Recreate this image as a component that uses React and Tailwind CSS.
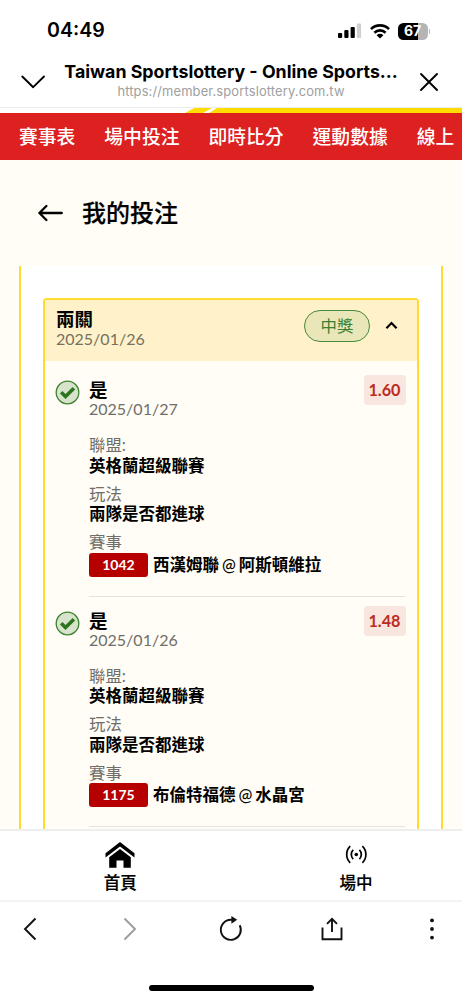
import { clsx } from 'clsx';

const menuItems = ['賽事表', '場中投注', '即時比分', '運動數據', '線上'];

const legs = [
  {
    id: '1042',
    pick: '是',
    date: '2025/01/27',
    odds: '1.60',
    league: '英格蘭超級聯賽',
    market: '兩隊是否都進球',
    home: '西漢姆聯',
    away: '阿斯頓維拉',
  },
  {
    id: '1175',
    pick: '是',
    date: '2025/01/26',
    odds: '1.48',
    league: '英格蘭超級聯賽',
    market: '兩隊是否都進球',
    home: '布倫特福德',
    away: '水晶宮',
  },
];

const StatusBar = () => (
  <div className="flex h-[62px] shrink-0 items-center justify-between pr-[32px] pl-[47px]">
    <span className="text-[19.6px] font-semibold leading-none">04:49</span>
    <div className="flex items-center">
      <svg width="24" height="16" viewBox="0 0 24 16">
        <rect x="0" y="10" width="4.2" height="5" rx="1" />
        <rect x="6.3" y="7" width="4.2" height="8" rx="1" />
        <rect x="12.6" y="4" width="4.2" height="11" rx="1" />
        <rect x="18.9" y="0.5" width="4.2" height="14.5" rx="1" fill="#d0d0d0" />
      </svg>
      <svg className="ml-2" width="20" height="15" viewBox="0 0 20 15">
        <g fill="none" stroke="#000" strokeWidth="2.6">
          <path d="M1 5.1a12.8 12.8 0 0 1 18 0" />
          <path d="M4.4 8.7a8 8 0 0 1 11.2 0" />
        </g>
        <path d="M10 14.6 6.6 11.2a4.9 4.9 0 0 1 6.8 0z" />
      </svg>
      <div className="ml-2 flex items-center">
        <div className="flex h-[17px] w-[30px] items-center justify-center rounded-[5.5px] bg-linear-to-r from-black from-67% to-[#b4b4b4] to-67% text-[14px] font-bold leading-none text-white">
          67
        </div>
        <div className="ml-px h-[5px] w-[1.5px] rounded-r-full bg-[#b4b4b4]" />
      </div>
    </div>
  </div>
);

const BrowserHeader = () => (
  <header className="flex h-[46px] shrink-0 items-start justify-between border-b border-[#ebebeb] px-5">
    <svg className="mt-[12px]" width="26" height="16" viewBox="0 0 26 16" fill="none" stroke="#000" strokeWidth="1.9" strokeLinecap="round" strokeLinejoin="round">
      <path d="M2.3 2.5 13.2 13.2 24 2.5" />
    </svg>
    <div className="mr-[3px] flex flex-col items-center whitespace-nowrap">
      <h1 className="text-[17.8px] font-bold leading-[20px]">Taiwan Sportslottery - Online Sports...</h1>
      <p className="text-[12.9px] leading-[20px] tracking-[0.15px] text-[#a0a0a0]">https://member.sportslottery.com.tw</p>
    </div>
    <svg className="mt-[10px] mr-[3px]" width="20" height="20" viewBox="0 0 20 20" stroke="#000" strokeWidth="1.9" strokeLinecap="round">
      <path d="m2 2 16 16M18 2 2 18" />
    </svg>
  </header>
);

const SiteMenu = () => (
  <>
    <svg className="block h-[5px] w-full shrink-0" viewBox="0 0 462 5">
      <path d="M194 0h18l-9 5h-18zM217 0h245v5H209z" fill="#ffdd00" />
    </svg>
    <nav className="flex h-[46.5px] shrink-0 items-center gap-[29px] overflow-hidden bg-[#dd2020] pt-[4px] pl-[19px] text-[18.8px] font-medium text-white">
      {menuItems.map((item) => (
        <span key={item} className="shrink-0 whitespace-nowrap leading-none">{item}</span>
      ))}
    </nav>
  </>
);

const CheckBadge = () => (
  <svg className="mt-[5px] shrink-0" width="25" height="25" viewBox="0 0 25 25">
    <circle cx="12.5" cy="12.5" r="11.3" fill="#d7e3cd" stroke="#3b812f" strokeWidth="1.3" />
    <path d="m6.2 12.3 4.3 4.3 8.4-8.4" fill="none" stroke="#2c751e" strokeWidth="3.5" />
  </svg>
);

const Field = ({ label, value }) => (
  <div className="h-[48.7px]">
    <p className="text-[16.4px] leading-[20.5px] text-[#6f6e6a]">{label}</p>
    <p className="text-[16.5px] font-bold leading-[20.5px]">{value}</p>
  </div>
);

const Leg = ({ leg, first }) => (
  <div className={clsx('flex shrink-0 pr-[11.5px] pl-[10px]', first ? 'h-[236px] pt-[14.5px]' : 'h-[230.5px] pt-[9px]')}>
    <CheckBadge />
    <div className="ml-[9px] flex flex-1 flex-col">
      <div className="flex h-[60px] items-start justify-between">
        <div>
          <p className="-mt-px pt-[5px] text-[18.5px] font-bold leading-[22px]">{leg.pick}</p>
          <p className="text-[16px] leading-[15px] text-[#6f6e6a]">{leg.date}</p>
        </div>
        <span className="flex h-[30px] w-[42px] items-center justify-center rounded-[4px] bg-[#f8e6df] pt-px text-[16.2px] font-bold leading-none text-[#bd2b20]">
          {leg.odds}
        </span>
      </div>
      <Field label="聯盟:" value={leg.league} />
      <Field label="玩法" value={leg.market} />
      <p className="text-[16.4px] leading-[20.5px] text-[#6f6e6a]">賽事</p>
      <div className="flex items-center gap-[5px] whitespace-nowrap text-[16.5px] font-bold leading-[24px]">
        <span className="flex h-[24px] w-[59px] items-center justify-center rounded-[3px] bg-[#b60000] text-[14px] text-white">
          {leg.id}
        </span>
        <span className="flex gap-[3px]">
          <span>{leg.home}</span>
          <span className="text-[16.5px] font-medium">@</span>
          <span>{leg.away}</span>
        </span>
      </div>
      <div className="mt-auto mr-[0.5px] h-px bg-[#e6e3dc]" />
    </div>
  </div>
);

const BetCard = () => (
  <div className="flex w-[376px] shrink-0 flex-col rounded-[4px] border-2 border-[#ffdb2b] bg-[#fffdf5]">
    <div className="flex h-[60.5px] shrink-0 items-start justify-between bg-[#fff2ca] pr-[19px] pl-[11px]">
      <div className="pt-[9px]">
        <p className="text-[18.5px] font-bold leading-[20px]">兩關</p>
        <p className="text-[16px] leading-[20px] text-[#76715f]">2025/01/26</p>
      </div>
      <div className="flex items-center pt-[10px]">
        <span className="flex h-[32px] w-[66px] items-center justify-center rounded-full border-[1.5px] border-[#478a39] bg-[#e9e7b9] pt-px text-[16.4px] text-[#3c8030]">
          中獎
        </span>
        <svg className="ml-[15px]" width="13" height="10" viewBox="0 0 13 10" fill="none" stroke="#000" strokeWidth="2.2">
          <path d="M1.4 7.2 6.5 2l5.1 5.2" />
        </svg>
      </div>
    </div>
    {legs.map((leg, i) => (
      <Leg key={leg.id} leg={leg} first={i === 0} />
    ))}
    <div className="h-10 shrink-0" />
  </div>
);

const TabBar = () => (
  <div className="grid h-[71.5px] shrink-0 grid-cols-2 border-t-2 border-[#eeeeee] bg-white text-[16.5px] font-medium">
    <div className="flex flex-col items-center pt-[10px] pl-[9.5px]">
      <svg width="30" height="28" viewBox="0 0 30 28">
        <path d="M.5 12.2 15 1l14.5 11.2v4.2L15 5.4.5 16.4z" />
        <path d="M4.2 16.3 15 8.1l10.8 8.2v10.4h-7.3v-7.2h-7v7.2H4.2z" />
      </svg>
      <span className="mt-[3px] leading-[22px] [-webkit-text-stroke:0.2px]">首頁</span>
    </div>
    <div className="flex flex-col items-center pt-[10px] pl-[19px]">
      <svg width="24" height="28" viewBox="0 0 24 28" fill="none" stroke="#000" strokeWidth="1.7">
        <circle cx="12.3" cy="13.5" r="1.8" fill="#000" stroke="none" />
        <path d="M9.2 8.9a6.5 6.5 0 0 0 0 9.2M15.4 8.9a6.5 6.5 0 0 1 0 9.2" />
        <path d="M6.2 5.2a11.6 11.6 0 0 0 0 16.6M18.4 5.2a11.6 11.6 0 0 1 0 16.6" />
      </svg>
      <span className="mt-[3px] leading-[22px] [-webkit-text-stroke:0.2px]">場中</span>
    </div>
  </div>
);

const BrowserToolbar = () => (
  <footer className="flex h-[100px] shrink-0 flex-col items-center justify-between border-t-2 border-[#f3f3f3] bg-white">
    <div className="flex w-full items-center justify-between px-[18px] pt-[14px]">
      <svg width="24" height="26" viewBox="0 0 24 26" fill="none" stroke="#111" strokeWidth="1.9">
        <path d="M17.5 2.5 7 13l10.5 10.5" />
      </svg>
      <svg className="-mr-px" width="24" height="26" viewBox="0 0 24 26" fill="none" stroke="#9c9c9c" strokeWidth="1.9">
        <path d="M6.5 2.5 17 13 6.5 23.5" />
      </svg>
      <svg width="26" height="26" viewBox="0 0 26 26" fill="none" stroke="#111" strokeWidth="1.9">
        <path d="M14.5 3.8h-1.7a10 10 0 1 0 8.9 5.4" />
        <path d="M13.4 0 19.2 3.8l-5.8 3.9z" fill="#111" stroke="none" />
      </svg>
      <svg width="24" height="26" viewBox="0 0 24 26" fill="none" stroke="#111" strokeWidth="1.9">
        <path d="M2.5 11.5v11.8h19V11.5M12 16V2.8M7 7.8l5-5 5 5" />
      </svg>
      <svg width="24" height="26" viewBox="0 0 24 26" fill="#111">
        <circle cx="12" cy="4.4" r="1.9" />
        <circle cx="12" cy="13" r="1.9" />
        <circle cx="12" cy="21.6" r="1.9" />
      </svg>
    </div>
    <div className="mb-[9px] h-[6.5px] w-[165px] rounded-full bg-black" />
  </footer>
);

const App = () => (
  <div className="flex h-[1000px] w-[462px] flex-col overflow-hidden bg-white font-['Inter','Noto_Sans_CJK_TC',sans-serif] text-black" lang="zh-Hant">
    <StatusBar />
    <BrowserHeader />
    <SiteMenu />
    <main className="flex min-h-0 flex-1 flex-col bg-[#fffdf5] font-['Lato','Noto_Sans_CJK_TC',sans-serif]">
      <div className="flex h-[106.5px] shrink-0 items-center gap-[19px] pl-[38px]">
        <svg width="25" height="18" viewBox="0 0 25 18" fill="none" stroke="#000" strokeWidth="2.3" strokeLinecap="round" strokeLinejoin="round">
          <path d="M23.8 9H1.4M8.4 2 1.4 9l7 7" />
        </svg>
        <h2 className="text-[24px] font-medium leading-none [-webkit-text-stroke:0.2px]">我的投注</h2>
      </div>
      <section className="ml-[19px] flex min-h-0 w-[424px] flex-1 flex-col items-center overflow-hidden border-x-2 border-[#ffdb2b] bg-white pt-[32px]">
        <BetCard />
      </section>
    </main>
    <TabBar />
    <BrowserToolbar />
  </div>
);

export default App;
